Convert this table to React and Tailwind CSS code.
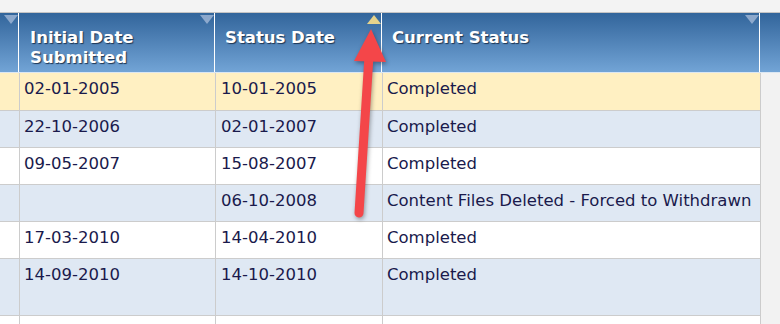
import React from "react";

const rows = [
  { submitted: "02-01-2005", status: "10-01-2005", current: "Completed", bg: "bg-[#fff0c2]" },
  { submitted: "22-10-2006", status: "02-01-2007", current: "Completed", bg: "bg-[#dfe8f3]" },
  { submitted: "09-05-2007", status: "15-08-2007", current: "Completed", bg: "bg-white" },
  { submitted: "", status: "06-10-2008", current: "Content Files Deleted - Forced to Withdrawn", bg: "bg-[#dfe8f3]" },
  { submitted: "17-03-2010", status: "14-04-2010", current: "Completed", bg: "bg-white" },
  { submitted: "14-09-2010", status: "14-10-2010", current: "Completed", bg: "bg-[#dfe8f3]", tall: true },
  { submitted: "", status: "", current: "Completed", bg: "bg-white" },
];

const SortMark = ({ up }) => (
  <svg
    width="14"
    height="9"
    viewBox="0 0 14 9"
    className="absolute top-[2px] right-0"
  >
    {up ? (
      <polygon points="7,0 14,9 0,9" fill="#e6d38c" />
    ) : (
      <polygon points="0,0 14,0 7,9" fill="#a9bedb" fillOpacity="0.75" />
    )}
  </svg>
);

const HeadCell = ({ width, label, up, pad = "pl-[10px]" }) => (
  <div
    className={`relative ${width} h-full shrink-0 border-r border-white ${pad} pt-[15px] pr-4 font-bold text-white text-[16.5px] leading-[20px] [text-shadow:1px_1px_1px_#1d3553]`}
  >
    {label}
    <SortMark up={up} />
  </div>
);

const App = () => {
  return (
    <div className="relative w-[780px] h-[324px] overflow-hidden bg-[#f2f2f2] font-['DejaVu_Sans',Verdana,sans-serif]">
      {/* top strip, mostly scrolled out of view */}
      <div className="h-[13px] overflow-hidden bg-[#f3f3f3] border-b border-[#c4c4c4]">
        <div className="ml-[566px] -mt-[13px] text-[15px] leading-[16px] text-[#2d6bd0]">
          Form
        </div>
      </div>

      {/* header */}
      <div className="flex h-[60px] bg-linear-to-b from-[#32659b] to-[#72a4d6] border-b border-[#dbe7f3]">
        <HeadCell width="w-[19px]" label="" pad="pl-0" />
        <HeadCell width="w-[196px]" label={<>Initial Date<br />Submitted</>} pad="pl-[11px]" />
        <HeadCell width="w-[167px]" label="Status Date" up />
        <HeadCell width="w-[378px]" label="Current Status" />
        <div className="flex-1" />
      </div>

      {/* body */}
      <div className="text-[16.5px] leading-[20px] text-[#1a1a4c]">
        {rows.map((row, i) => (
          <div
            key={i}
            className={`flex w-[761px] ${row.tall ? "h-[57px]" : i === 0 ? "h-[38px]" : "h-[37px]"} ${row.bg} border-b border-[#cccccc]`}
          >
            <div className="w-[20px] shrink-0 border-r border-[#cccccc]" />
            <div className="w-[196px] shrink-0 border-r border-[#cccccc] pl-[4px] pt-[6px]">
              {row.submitted}
            </div>
            <div className="w-[167px] shrink-0 border-r border-[#cccccc] pl-[5px] pt-[6px]">
              {row.status}
            </div>
            <div className="w-[378px] shrink-0 border-r border-[#cccccc] pl-[4px] pt-[6px] whitespace-nowrap">
              {row.current}
            </div>
          </div>
        ))}
      </div>

      {/* annotation arrow */}
      <svg
        width="780"
        height="324"
        viewBox="0 0 780 324"
        className="absolute inset-0 pointer-events-none [filter:drop-shadow(1px_2px_2px_rgba(0,0,0,0.35))]"
      >
        <line
          x1="359"
          y1="213"
          x2="369"
          y2="56"
          stroke="#f44649"
          strokeWidth="9"
          strokeLinecap="round"
        />
        <polygon points="371,29 354,61 386,62" fill="#f44649" />
      </svg>
    </div>
  );
};

export default App;
